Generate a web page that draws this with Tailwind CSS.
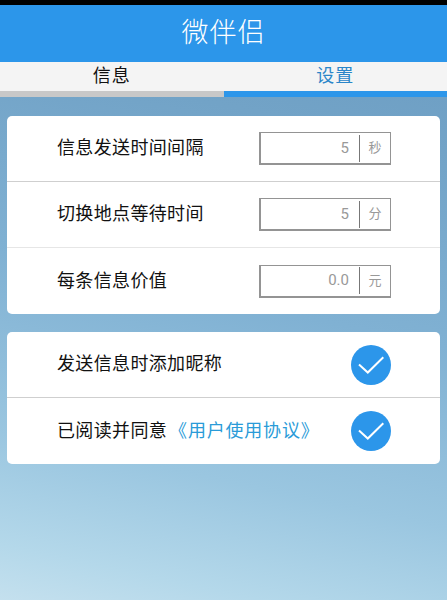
<!DOCTYPE html>
<html lang="zh">
<head>
<meta charset="utf-8">
<script src="https://cdn.jsdelivr.net/npm/@tailwindcss/browser@4"></script>
</head>
<body class="m-0">
<div class="relative w-[447px] h-[600px] overflow-hidden flex flex-col font-['Liberation_Sans','Noto_Sans_CJK_SC',sans-serif] bg-[linear-gradient(192deg,#6a9bc1_0%,#72a3c7_22%,#80b1d3_50%,#9ac6e0_76%,#b4d8ea_92%,#c4e0ee_100%)]">
  <div class="h-[5px] bg-black shrink-0"></div>
  <div class="h-[57px] shrink-0 bg-[#2c96ea] flex items-center justify-center text-white text-[27px] font-light tracking-[1px]">微伴侣</div>
  <div class="flex h-[35px] shrink-0">
    <div class="w-1/2 bg-[#f4f4f4] border-b-[6px] border-[#c8c8c8] flex items-center justify-center text-[18px] text-[#111] tracking-[1px]">信息</div>
    <div class="w-1/2 bg-[#f4f4f4] border-b-[6px] border-[#2c96ea] flex items-center justify-center text-[18px] text-[#2b86c9] tracking-[1px]">设置</div>
  </div>
  <div class="flex flex-col gap-[18px] px-[7px] pt-[19px]">
    <div class="bg-white rounded-[5px] flex flex-col">
      <div class="h-[66px] flex items-center justify-between pl-[50px] pr-[49px] border-b border-[#cfcfcf]">
        <span class="text-[18px] text-[#111] tracking-[0.35px]">信息发送时间间隔</span>
        <div class="w-[132px] h-[33px] border border-l-2 border-b-2 border-[#949494] flex items-center text-[#999]">
          <span class="flex-1 text-right pr-[10px] text-[15px] font-['Roboto']">5</span>
          <span class="w-[31px] h-[27px] border-l border-[#777] flex items-center justify-center text-[13px]">秒</span>
        </div>
      </div>
      <div class="h-[66px] flex items-center justify-between pl-[50px] pr-[49px] border-b border-[#e6e6e6]">
        <span class="text-[18px] text-[#111] tracking-[0.35px]">切换地点等待时间</span>
        <div class="w-[132px] h-[33px] border border-l-2 border-b-2 border-[#949494] flex items-center text-[#999]">
          <span class="flex-1 text-right pr-[10px] text-[15px] font-['Roboto']">5</span>
          <span class="w-[31px] h-[27px] border-l border-[#777] flex items-center justify-center text-[13px]">分</span>
        </div>
      </div>
      <div class="h-[66px] flex items-center justify-between pl-[50px] pr-[49px]">
        <span class="text-[18px] text-[#111] tracking-[0.35px]">每条信息价值</span>
        <div class="w-[132px] h-[33px] border border-l-2 border-b-2 border-[#949494] flex items-center text-[#999]">
          <span class="flex-1 text-right pr-[10px] text-[15px] font-['Roboto']">0.0</span>
          <span class="w-[31px] h-[27px] border-l border-[#777] flex items-center justify-center text-[13px]">元</span>
        </div>
      </div>
    </div>
    <div class="bg-white rounded-[5px] flex flex-col">
      <div class="h-[66px] flex items-center justify-between pl-[50px] pr-[49px] border-b border-[#cfcfcf]">
        <span class="text-[18px] text-[#111] tracking-[0.35px]">发送信息时添加昵称</span>
        <svg class="w-10 h-10 shrink-0" viewBox="0 0 40 40"><circle cx="20" cy="20" r="20" fill="#2c96ea"/><path d="M8 19.5 L16.8 27.5 L32.3 12.2" fill="none" stroke="#fff" stroke-width="2"/></svg>
      </div>
      <div class="h-[66px] flex items-center justify-between pl-[50px] pr-[49px]">
        <span class="text-[18px] text-[#111] tracking-[0.35px] whitespace-nowrap">已阅读并同意<span class="text-[#2a9bd8] ml-[2px] tracking-[0.8px]">《用户使用协议》</span></span>
        <svg class="w-10 h-10 shrink-0" viewBox="0 0 40 40"><circle cx="20" cy="20" r="20" fill="#2c96ea"/><path d="M8 19.5 L16.8 27.5 L32.3 12.2" fill="none" stroke="#fff" stroke-width="2"/></svg>
      </div>
    </div>
  </div>
</div>
</body>
</html>
